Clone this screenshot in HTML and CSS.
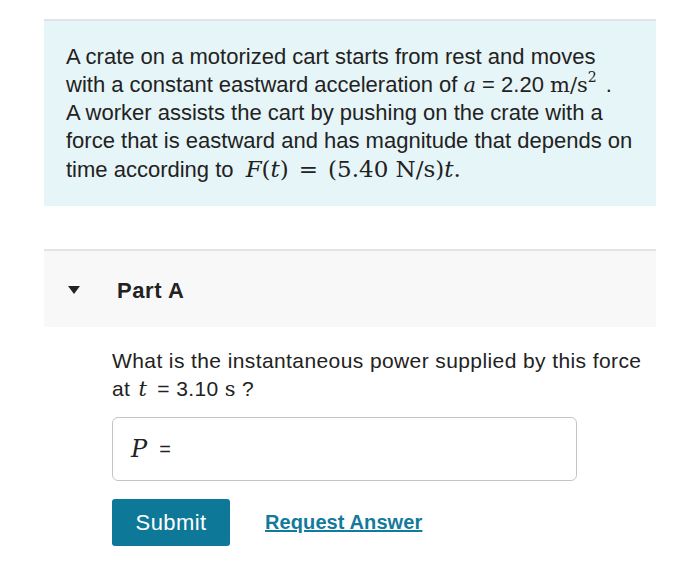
FILE: index.html
```html
<!DOCTYPE html>
<html>
<head>
<meta charset="utf-8">
<link rel="stylesheet" href="styles.css">
</head>
<body>
<div class="page">
  <section class="intro">
    <p>A crate on a motorized cart starts from rest and moves<br>with a constant eastward acceleration of <span class="mi">a</span> = 2.20 <span class="mr">m/s<sup>2</sup></span> <span class="dot">.</span><br>A worker assists the cart by pushing on the crate with a<br>force that is eastward and has magnitude that depends on<br>time according to <span class="math"><span class="mi">F</span>(<span class="mi">t</span>)<span class="rel">=</span>(5.40 N/s)<span class="mi">t</span>.</span></p>
  </section>
  <section class="part-head">
    <span class="caret"></span>
    <span class="part-title">Part A</span>
  </section>
  <section class="part-body">
    <p class="question">What is the instantaneous power supplied by this force<br>at <span class="mi">t</span> = 3.10 <span class="mr">s</span> ?</p>
    <div class="answer-box"><span class="mi big">P</span><span class="eq">=</span></div>
    <div class="actions">
      <button class="submit">Submit</button>
      <a class="request" href="#">Request Answer</a>
    </div>
  </section>
</div>
</body>
</html>
```
FILE: styles.css
```css
html, body {
  margin: 0;
  padding: 0;
  background: #ffffff;
}
body {
  font-family: "Liberation Sans", Arial, sans-serif;
  color: #222222;
}
.page {
  width: 612px;
  margin-left: 44px;
  padding-top: 19px;
}
.intro {
  background: #e6f5f7;
  border-top: 2px solid #dfe4e6;
  padding: 22px 10px 22px 22px;
  height: 141px;
}
.intro p {
  margin: 0;
  font-size: 22px;
  letter-spacing: 0;
  line-height: 28px;
  white-space: nowrap;
}
.dot {
  margin-left: 3px;
}
.mi {
  font-family: "DejaVu Serif", "Liberation Serif", serif;
  font-style: italic;
  font-size: 21px;
  letter-spacing: 0;
}
.mr {
  font-family: "DejaVu Serif", "Liberation Serif", serif;
  font-size: 21px;
  letter-spacing: 0;
}
.mr sup {
  font-size: 14px;
  line-height: 0;
  vertical-align: 10px;
}
.math {
  font-family: "DejaVu Serif", "Liberation Serif", serif;
  font-size: 23px;
  letter-spacing: 0;
  margin-left: 6px;
}
.math .mi {
  font-size: 23px;
}
.rel {
  margin: 0 10px;
}
.part-head {
  margin-top: 43px;
  border-top: 2px solid #e4e4e4;
  background: #f8f8f8;
  display: flex;
  align-items: center;
  padding-left: 24px;
  padding-top: 3px;
  box-sizing: border-box;
  height: 78px;
}
.caret {
  width: 0;
  height: 0;
  border-left: 6px solid transparent;
  border-right: 6px solid transparent;
  border-top: 8px solid #222;
  margin-right: 37px;
  margin-top: -1px;
}
.part-title {
  font-weight: bold;
  font-size: 22px;
  letter-spacing: 0.6px;
  color: #222;
}
.part-body {
  padding-left: 68px;
  padding-top: 20px;
}
.question {
  margin: 0;
  font-size: 21px;
  letter-spacing: 0.4px;
  line-height: 28px;
  white-space: nowrap;
}
.question .mi {
  margin: 0 4px 0 2px;
}
.answer-box {
  margin-top: 14px;
  width: 465px;
  height: 64px;
  border: 1px solid #c4c4c4;
  border-radius: 6px;
  box-sizing: border-box;
  display: flex;
  align-items: center;
  padding-left: 18px;
  gap: 12px;
}
.answer-box .big {
  font-size: 24px;
}
.eq {
  font-size: 20px;
}
.actions {
  margin-top: 18px;
  display: flex;
  align-items: center;
  gap: 35px;
}
.submit {
  width: 118px;
  height: 47px;
  background: #0e7898;
  color: #ffffff;
  border: none;
  border-radius: 3px;
  font-family: "Liberation Sans", Arial, sans-serif;
  font-size: 22px;
  letter-spacing: 0.4px;
  padding: 0;
}
.request {
  color: #127a9c;
  font-weight: bold;
  font-size: 20px;
  letter-spacing: 0.1px;
  text-decoration: underline;
}
```
